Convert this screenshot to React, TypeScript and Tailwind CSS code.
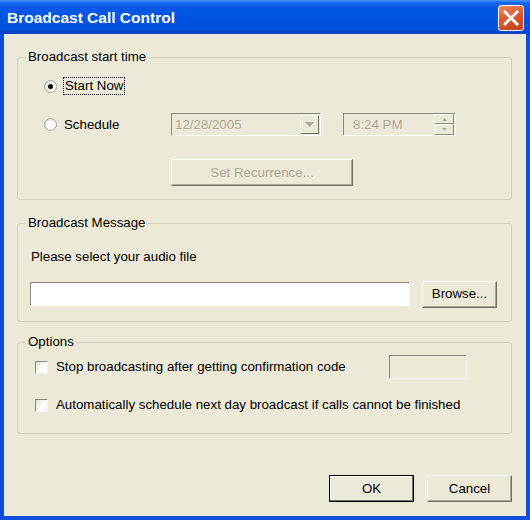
import React from "react";

function Radio({ checked }: { checked?: boolean }) {
  return (
    <span className="w-[13px] h-[13px] shrink-0 rounded-full border border-[#a8a89a] bg-[radial-gradient(circle_at_62%_62%,#ffffff_40%,#cfcdc0_100%)] flex items-center justify-center">
      {checked && <span className="w-[5px] h-[5px] rounded-full bg-black" />}
    </span>
  );
}

function Check() {
  return (
    <span className="w-[13px] h-[13px] shrink-0 border border-t-[#8c8a80] border-l-[#8c8a80] border-r-[#f4f3ee] border-b-[#f4f3ee] bg-[linear-gradient(135deg,#e4e2d8_0%,#ffffff_60%)]" />
  );
}

function Btn({ children, w, def, disabled }: { children: React.ReactNode; w: string; def?: boolean; disabled?: boolean }) {
  return (
    <div
      className={
        "h-[27px] flex items-center justify-center bg-[#ECE9D8] " +
        w +
        (def
          ? " border border-black shadow-[inset_-1px_-1px_0_#716f64,inset_1px_1px_0_#ffffff]"
          : " border border-t-white border-l-white border-r-[#716f64] border-b-[#716f64] shadow-[inset_-1px_-1px_0_#aca899]")
      }
    >
      <span className={disabled ? "text-[#ACA899]" : "text-black"}>{children}</span>
    </div>
  );
}

function Sunken({ className, children }: { className: string; children?: React.ReactNode }) {
  return (
    <div className={"border border-t-[#8c8a80] border-l-[#8c8a80] border-r-white border-b-white " + className}>
      {children}
    </div>
  );
}

function Group({ title, h, children, className }: { title: string; h: string; children: React.ReactNode; className?: string }) {
  return (
    <fieldset className={"border border-[#D0D0BF] rounded-[3px] " + h + " " + (className ?? "")}>
      <legend className="ml-[8px] px-[2px] leading-[16px]">{title}</legend>
      {children}
    </fieldset>
  );
}

export default function App() {
  return (
    <div className="w-[530px] h-[520px] bg-[#0B4FDC] flex flex-col font-['Liberation_Sans',Arial,sans-serif] text-[13.3px] leading-[16px] text-black">
      <div className="h-[34px] shrink-0 flex items-center justify-between pl-[7px] pr-[6px] bg-[linear-gradient(180deg,#4A95FA_0%,#1668EE_8%,#0458E6_25%,#0054E3_55%,#0050DC_85%,#003FC0_100%)]">
        <span className="text-white font-bold text-[15.5px] leading-[18px] mt-[2px]">Broadcast Call Control</span>
        <div className="w-[26px] h-[26px] mt-[1px] rounded-[3px] border border-white bg-[linear-gradient(160deg,#EE8A66_0%,#DA5A30_45%,#C8401A_100%)] flex items-center justify-center">
          <svg width="18" height="18" viewBox="0 0 18 18">
            <path d="M3 3 L15 15 M15 3 L3 15" stroke="#ffffff" strokeWidth="3" strokeLinecap="square" />
          </svg>
        </div>
      </div>
      <div className="flex-1 mx-[4px] mb-[4px] bg-[#ECE9D8] flex flex-col pl-[13px] pr-[14px] pt-[15px]">
        <Group title="Broadcast start time" h="h-[151px]">
          <div className="mt-[12px] h-[18px] flex items-center pl-[26px]">
            <Radio checked />
            <span className="ml-[6px] border border-dotted border-black px-[1px] leading-[16px]">Start Now</span>
          </div>
          <div className="mt-[18px] h-[23px] flex items-center">
            <div className="w-[153px] pl-[26px] flex items-center">
              <Radio />
              <span className="ml-[7px]">Schedule</span>
            </div>
            <Sunken className="w-[150px] h-[23px] flex items-center bg-[#ECE9D8] pr-[1px]">
              <span className="flex-1 pl-[3px] text-[#ACA899]">12/28/2005</span>
              <div className="w-[19px] h-[19px] bg-[#ECE9D8] border border-t-white border-l-white border-r-[#716f64] border-b-[#716f64] flex items-center justify-center">
                <svg width="9" height="5" viewBox="0 0 9 5">
                  <path d="M0 0 H9 L4.5 5 Z" fill="#ACA899" />
                </svg>
              </div>
            </Sunken>
            <Sunken className="ml-[22px] w-[113px] h-[23px] flex items-center bg-[#ECE9D8] pr-[1px]">
              <span className="flex-1 pl-[9px] text-[#ACA899]">8:24 PM</span>
              <div className="w-[20px] h-[21px] flex flex-col">
                <div className="h-[10px] border border-t-white border-l-white border-r-[#8c8a80] border-b-[#8c8a80] flex items-center justify-center">
                  <svg width="5" height="3" viewBox="0 0 5 3"><path d="M0 3 H5 L2.5 0 Z" fill="#ACA899" /></svg>
                </div>
                <div className="h-[11px] border border-t-white border-l-white border-r-[#8c8a80] border-b-[#8c8a80] flex items-center justify-center">
                  <svg width="5" height="3" viewBox="0 0 5 3"><path d="M0 0 H5 L2.5 3 Z" fill="#ACA899" /></svg>
                </div>
              </div>
            </Sunken>
          </div>
          <div className="mt-[23px] ml-[153px]">
            <Btn w="w-[182px]" disabled>Set Recurrence...</Btn>
          </div>
        </Group>

        <Group title="Broadcast Message" h="h-[107px]" className="mt-[15px]">
          <div className="mt-[18px] pl-[13px]">Please select your audio file</div>
          <div className="mt-[16px] h-[26px] flex items-center">
            <Sunken className="ml-[12px] w-[380px] h-[24px] bg-white" />
            <div className="ml-[12px]">
              <Btn w="w-[75px] h-[26px]">Browse...</Btn>
            </div>
          </div>
        </Group>

        <Group title="Options" h="h-[100px]" className="mt-[12px]">
          <div className="mt-[5px] h-[24px] flex items-center">
            <div className="w-[371px] pl-[17px] flex items-center">
              <Check />
              <span className="ml-[8px]">Stop broadcasting after getting confirmation code</span>
            </div>
            <Sunken className="w-[78px] h-[24px] bg-[#ECE9D8]" />
          </div>
          <div className="mt-[18px] h-[16px] flex items-center pl-[17px]">
            <Check />
            <span className="ml-[8px]">Automatically schedule next day broadcast if calls cannot be finished</span>
          </div>
        </Group>

        <div className="mt-[41px] flex justify-end gap-[13px]">
          <Btn w="w-[85px]" def>OK</Btn>
          <Btn w="w-[85px]">Cancel</Btn>
        </div>
      </div>
    </div>
  );
}
